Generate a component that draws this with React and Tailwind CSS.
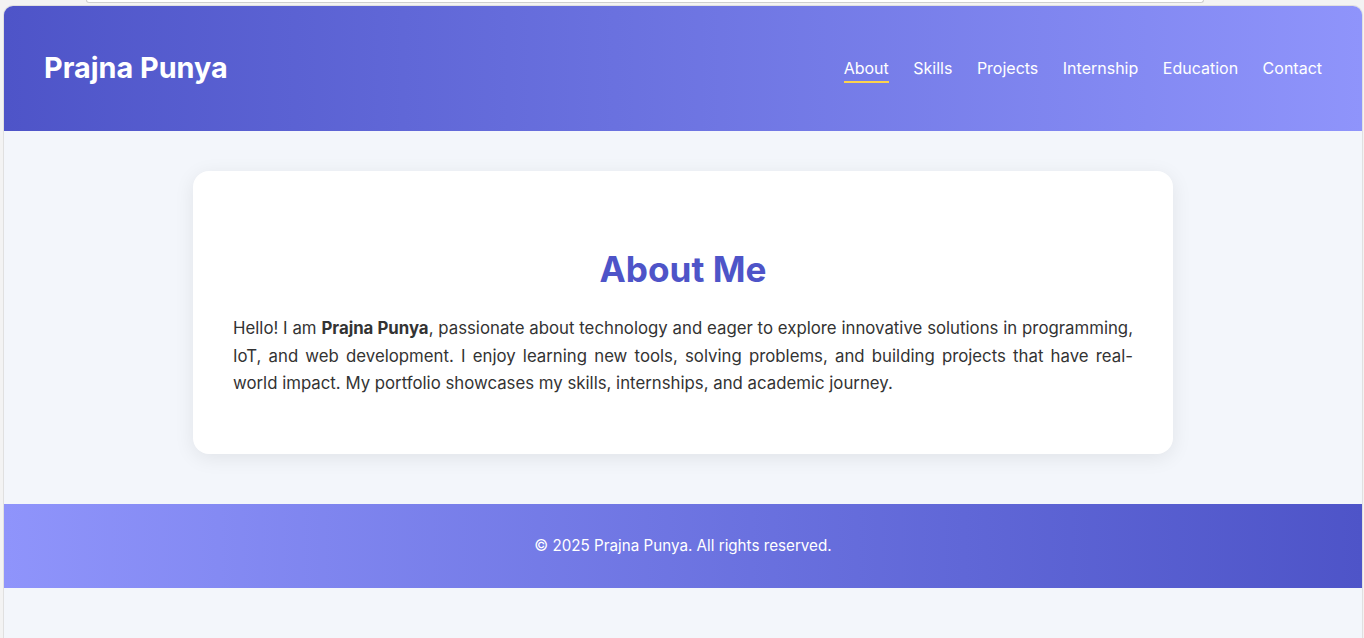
export default function App() {
  const nav = ["About", "Skills", "Projects", "Internship", "Education", "Contact"];
  return (
    <div
      className="h-[638px] w-[1364px] overflow-hidden bg-[#f3f3f3] flex flex-col"
      style={{ fontFamily: "Inter, 'Noto Sans', sans-serif" }}
    >
      <div className="h-[5px] shrink-0">
        <div className="ml-[86px] w-[1118px] h-[3px] rounded-b-[6px] border border-t-0 border-[#cfcfcf] bg-white" />
      </div>
      <div className="flex-1 ml-[3px] mr-[1px] rounded-t-[10px] border border-b-0 border-[#e0e0e0] overflow-hidden bg-[#f3f6fb] flex flex-col">
        <header className="h-[125px] shrink-0 flex items-center justify-between px-10 bg-gradient-to-r from-[#4e54c8] to-[#8f94fb]">
          <h1 className="text-[28.8px] font-bold text-white pb-[1px]">Prajna Punya</h1>
          <nav className="flex items-center gap-[24.5px] pt-[2px]">
            {nav.map((n, i) => (
              <a
                key={n}
                className={
                  i === 0
                    ? "text-[16px] text-white leading-6 border-b-2 border-[#fcd34d] pb-[1px]"
                    : "text-[16px] text-white leading-6 border-b-2 border-transparent pb-[1px]"
                }
              >
                {n}
              </a>
            ))}
          </nav>
        </header>
        <main className="pt-10 pb-[50px] shrink-0">
          <section className="w-[980px] mx-auto bg-white rounded-2xl px-10 pt-10 pb-[56px] shadow-[0_4px_20px_rgba(0,0,0,0.08)]">
            <h2 className="mt-[36px] mb-[24px] text-center text-[35.2px] leading-[44px] font-bold text-[#4e54c8]">
              About Me
            </h2>
            <p className="text-[16.8px] leading-[27.5px] text-[#333333] text-justify">
              Hello! I am <strong className="font-bold">Prajna Punya</strong>, passionate about technology and eager to explore innovative solutions in programming, IoT, and web development. I enjoy learning new tools, solving problems, and building projects that have real-world impact. My portfolio showcases my skills, internships, and academic journey.
            </p>
          </section>
        </main>
        <footer className="h-[84px] shrink-0 flex items-center justify-center bg-gradient-to-r from-[#8f94fb] to-[#4e54c8]">
          <p className="text-[15.2px] text-white pt-[1px]">© 2025 Prajna Punya. All rights reserved.</p>
        </footer>
      </div>
    </div>
  );
}
